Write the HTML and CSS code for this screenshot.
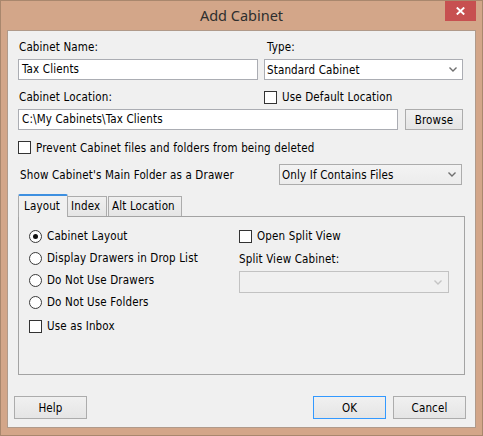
FILE: index.html
```html
<!DOCTYPE html>
<html>
<head>
<meta charset="utf-8">
<title>Add Cabinet</title>
<link rel="stylesheet" href="styles.css">
</head>
<body>
<div class="window">
  <div class="titlebar">
    <span></span>
    <div class="title">Add Cabinet</div>
    <div class="close">
      <svg width="9" height="8" viewBox="0 0 9 8"><path d="M0.8 0.5 L8.2 7.5 M8.2 0.5 L0.8 7.5" stroke="#ffffff" stroke-width="1.9" fill="none"/></svg>
    </div>
  </div>
  <div class="client">
    <div class="labels">
      <span class="lbl name-col">Cabinet Name:</span>
      <span class="lbl type-col type-lbl">Type:</span>
    </div>
    <div class="fields">
      <div class="input name-col">Tax Clients</div>
      <div class="select type-col"><span>Standard Cabinet</span><svg class="chev" width="8" height="5" viewBox="0 0 8 5"><path d="M0.5 0.5 L4 4 L7.5 0.5" stroke="#6f6f6f" stroke-width="1.4" fill="none"/></svg></div>
    </div>
    <div class="loc-head">
      <span class="lbl loc-label">Cabinet Location:</span>
      <div class="check"><span class="box"></span><span>Use Default Location</span></div>
    </div>
    <div class="loc-row">
      <div class="input loc-input">C:\My Cabinets\Tax Clients</div>
      <div class="btn browse">Browse</div>
    </div>
    <div class="check prevent"><span class="box"></span><span>Prevent Cabinet files and folders from being deleted</span></div>
    <div class="show-row">
      <span class="show-lbl">Show Cabinet's Main Folder as a Drawer</span>
      <div class="select combo"><span>Only If Contains Files</span><svg class="chev" width="8" height="5" viewBox="0 0 8 5"><path d="M0.5 0.5 L4 4 L7.5 0.5" stroke="#6f6f6f" stroke-width="1.4" fill="none"/></svg></div>
    </div>
    <div class="tabs">
      <div class="tab selected tab-layout">Layout</div>
      <div class="tab tab-index">Index</div>
      <div class="tab tab-alt">Alt Location</div>
    </div>
    <div class="panel">
      <div class="pcol">
        <div class="radio-row"><span class="radio on"></span><span>Cabinet Layout</span></div>
        <div class="radio-row"><span class="radio"></span><span>Display Drawers in Drop List</span></div>
        <div class="radio-row"><span class="radio"></span><span>Do Not Use Drawers</span></div>
        <div class="radio-row"><span class="radio"></span><span>Do Not Use Folders</span></div>
        <div class="check inbox"><span class="box"></span><span>Use as Inbox</span></div>
      </div>
      <div class="pcol">
        <div class="check split"><span class="box"></span><span>Open Split View</span></div>
        <div class="lbl split-lbl">Split View Cabinet:</div>
        <div class="select disabled split-sel"><span></span><svg class="chev" width="8" height="5" viewBox="0 0 8 5"><path d="M0.5 0.5 L4 4 L7.5 0.5" stroke="#c4c4c4" stroke-width="1.4" fill="none"/></svg></div>
      </div>
    </div>
    <div class="buttons">
      <div class="btn help">Help</div>
      <div class="btn ok">OK</div>
      <div class="btn cancel">Cancel</div>
    </div>
  </div>
</div>
</body>
</html>
```
FILE: styles.css
```css
* { box-sizing: border-box; }
html, body { margin: 0; padding: 0; background: #d3a689; }
body {
  font-family: "DejaVu Sans Condensed", "DejaVu Sans", sans-serif;
  font-size: 11.5px;
  letter-spacing: 0.15px;
  color: #000;
}
.window {
  width: 483px;
  height: 436px;
  background: #d3a689;
  border: 1px solid #a9876d;
  display: flex;
  flex-direction: column;
}
.titlebar {
  height: 29px;
  display: grid;
  grid-template-columns: 1fr auto 1fr;
  align-items: start;
}
.title {
  font-family: "Noto Sans", "Open Sans", sans-serif;
  font-size: 14.5px;
  letter-spacing: 0;
  line-height: 29px;
  color: #2e2e2e;
}
.close {
  justify-self: end;
  margin-right: 6px;
  width: 31px;
  height: 20px;
  background: #c75050;
  display: flex;
  align-items: center;
  justify-content: center;
}
.close svg { display: block; }
.client {
  margin: 0 6px;
  height: 398px;
  background: #f0f0f0;
  border: 1px solid #b09a8a;
  padding: 9px 11px 0 10px;
}
.lbl { line-height: 14px; white-space: nowrap; }
.labels { display: flex; height: 14px; }
.labels .lbl { padding-left: 1px; }
.name-col { width: 240px; margin-right: 6px; }
.type-col { width: 199px; }
.labels .type-lbl { padding-left: 3px; }
.fields { display: flex; margin-top: 5px; height: 21px; }
.input {
  height: 21px;
  background: #fff;
  border: 1px solid #abadb3;
  padding-left: 3px;
  line-height: 19px;
  white-space: nowrap;
}
.select {
  height: 21px;
  background: #fff;
  border: 1px solid #abadb3;
  padding: 0 5px 0 2px;
  display: flex;
  align-items: center;
  justify-content: space-between;
  white-space: nowrap;
}
.chev { display: block; flex: none; }
.loc-head { display: flex; align-items: center; height: 16px; margin-top: 9px; }
.loc-label { width: 246px; padding-left: 1px; }
.check { display: flex; align-items: center; white-space: nowrap; }
.box {
  width: 13px;
  height: 13px;
  border: 1px solid #333;
  background: #fff;
  margin-right: 5px;
  flex: none;
}
.loc-row { display: flex; gap: 7px; margin-top: 4px; height: 21px; }
.loc-input { width: 380px; }
.btn {
  height: 21px;
  border: 1px solid #acacac;
  background: linear-gradient(#f0f0f0, #e5e5e5);
  display: flex;
  align-items: center;
  justify-content: center;
  white-space: nowrap;
}
.browse { width: 58px; }
.prevent { margin-top: 11px; height: 13px; }
.show-row { display: flex; align-items: center; margin-top: 10px; height: 21px; }
.show-lbl { width: 261px; padding-left: 2px; white-space: nowrap; }
.combo {
  width: 183px;
  background: linear-gradient(#f3f3f3, #ececec);
  border-color: #acacac;
}
.tabs {
  display: flex;
  align-items: flex-start;
  height: 23px;
  margin-top: 9px;
  margin-bottom: -1px;
  position: relative;
  z-index: 1;
}
.tab {
  height: 20px;
  margin-top: 2px;
  border: 1px solid #acacac;
  border-bottom: none;
  background: linear-gradient(#f0f0f0, #e5e5e5);
  line-height: 19px;
  white-space: nowrap;
}
.tab.selected {
  height: 23px;
  margin-top: 0;
  background: #f0f0f0;
  border-top: 2px solid #3d8fe0;
  border-radius: 2px 2px 0 0;
  line-height: 20px;
}
.tab-layout { width: 50px; padding-left: 5px; }
.tab-index { width: 39px; border-left: none; padding-left: 3px; }
.tab-alt { width: 74px; margin-left: 1px; padding-left: 3px; }
.panel {
  width: 447px;
  height: 159px;
  border: 1px solid #a3a3a3;
  background: #f0f0f0;
  padding: 8px 0 0 10px;
  display: grid;
  grid-template-columns: 210px 210px;
  align-items: start;
}
.radio-row { display: flex; align-items: center; height: 22px; white-space: nowrap; }
.radio {
  width: 13px;
  height: 13px;
  border: 1px solid #3a3a3a;
  border-radius: 50%;
  background: #fff;
  margin-right: 5px;
  flex: none;
  display: flex;
  align-items: center;
  justify-content: center;
}
.radio.on::after {
  content: "";
  width: 5px;
  height: 5px;
  border-radius: 50%;
  background: #111;
}
.inbox { margin-top: 2px; height: 22px; }
.split { height: 22px; }
.split-lbl { margin-top: 5px; }
.split-sel {
  margin-top: 5px;
  width: 210px;
  height: 22px;
  background: #f0f0f0;
  border-color: #c2c2c2;
  padding-right: 6px;
}
.buttons {
  display: flex;
  gap: 7px;
  margin: 21px -2px 0 -4px;
  height: 23px;
}
.buttons .btn { width: 73px; height: 23px; }
.help { margin-right: auto; }
.ok { border-color: #3399ff; }
```
